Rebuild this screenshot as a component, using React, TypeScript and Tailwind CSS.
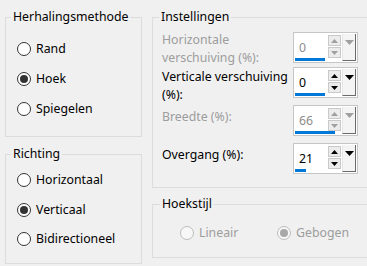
import type { ReactNode } from "react";

function Radio({
  label,
  checked = false,
  disabled = false,
  className = "",
}: {
  label: string;
  checked?: boolean;
  disabled?: boolean;
  className?: string;
}) {
  return (
    <div className={`flex h-[20px] items-center ${className}`}>
      <span
        className={`flex h-[14px] w-[14px] shrink-0 items-center justify-center rounded-full border ${
          disabled ? "border-[#bcbcbc] bg-[#f7f7f7]" : "border-[#333333] bg-white"
        }`}
      >
        {checked && (
          <span
            className={`h-[8px] w-[8px] rounded-full ${
              disabled ? "bg-[#a8a8a8]" : "bg-[#333333]"
            }`}
          />
        )}
      </span>
      <span
        className={`ml-[5px] leading-[20px] ${
          disabled ? "text-[#9d9d9d]" : "text-black"
        }`}
      >
        {label}
      </span>
    </div>
  );
}

function Group({
  title,
  className = "",
  legendClass = "ml-[5px]",
  children,
}: {
  title: string;
  className?: string;
  legendClass?: string;
  children: ReactNode;
}) {
  return (
    <fieldset className={`border border-[#dcdcdc] ${className}`}>
      <legend className={`px-[2px] leading-[16px] text-black ${legendClass}`}>
        {title}
      </legend>
      {children}
    </fieldset>
  );
}

function Arrow({ up, disabled }: { up?: boolean; disabled?: boolean }) {
  return (
    <svg width="7" height="4" viewBox="0 0 7 4">
      <polygon
        points={up ? "0,4 7,4 3.5,0" : "0,0 7,0 3.5,4"}
        fill={disabled ? "#a0a0a0" : "#000000"}
      />
    </svg>
  );
}

function Spinner({
  value,
  bar,
  disabled = false,
}: {
  value: string;
  bar: number;
  disabled?: boolean;
}) {
  return (
    <div className="flex h-[31px] w-[65px] shrink-0 border border-[#c6c6c6] bg-white p-[1px]">
      <div className="flex w-[46px] flex-col">
        <div className="flex flex-1">
          <div
            className={`flex-1 pl-[4px] pt-[5px] leading-[17px] ${
              disabled ? "text-[#8c8c8c]" : "text-black"
            }`}
          >
            {value}
          </div>
          <div className="flex w-[13px] flex-col gap-[1px] pt-[1px]">
            <div className="flex h-[11px] items-center justify-center border border-[#c9c9c9] bg-[#ececec]">
              <Arrow up disabled={disabled} />
            </div>
            <div className="flex h-[11px] items-center justify-center border border-[#c9c9c9] bg-[#ececec]">
              <Arrow disabled={disabled} />
            </div>
          </div>
        </div>
        <div className="h-[3px] bg-[#0078d7]" style={{ width: bar }} />
      </div>
      <div className="ml-[1px] flex h-[27px] w-[14px] justify-center border-r border-b border-l border-r-[#6a6a6a] border-b-[#6a6a6a] border-l-[#e6e6e6] bg-[#f4f4f4] pt-[6px]">
        <svg width="9" height="5" viewBox="0 0 9 5">
          <polygon
            points="0,0 9,0 4.5,5"
            fill={disabled ? "#a0a0a0" : "#000000"}
          />
        </svg>
      </div>
    </div>
  );
}

export default function App() {
  return (
    <div className="flex h-[266px] w-[367px] gap-[10px] overflow-hidden bg-[#f0f0f0] pl-[5px] pt-[9px] font-['Noto_Sans',sans-serif] text-[12.3px]">
      <div className="flex w-[137px] shrink-0 flex-col gap-[9px]">
        <Group title="Herhalingsmethode" className="h-[128px]">
          <div className="flex flex-col gap-[10px] pl-[11px] pt-[14px]">
            <Radio label="Rand" />
            <Radio label="Hoek" checked />
            <Radio label="Spiegelen" />
          </div>
        </Group>
        <Group title="Richting" className="h-[118px]">
          <div className="flex flex-col gap-[9.5px] pl-[11px] pt-[8px]">
            <Radio label="Horizontaal" />
            <Radio label="Verticaal" checked />
            <Radio label="Bidirectioneel" />
          </div>
        </Group>
      </div>

      <div className="flex w-[225px] shrink-0 flex-col gap-[8px]">
        <Group
          title="Instellingen"
          className="h-[179px]"
          legendClass="ml-[6px]"
        >
          <div className="flex flex-col pl-[9px] pt-[6px]">
            <div className="flex items-start">
              <div className="w-[131px] leading-[18px] text-[#9d9d9d]">
                Horizontale
                <br />
                verschuiving (%):
              </div>
              <div className="mt-[1px]">
                <Spinner value="0" bar={30} disabled />
              </div>
            </div>
            <div className="flex items-start">
              <div className="mt-[1px] w-[131px] leading-[18px] text-black">
                Verticale verschuiving
                <br />
                (%):
              </div>
              <Spinner value="0" bar={30} />
            </div>
            <div className="flex items-start">
              <div className="mt-[4px] w-[131px] leading-[18px] text-[#9d9d9d]">
                Breedte (%):
              </div>
              <div className="mt-[1px]">
                <Spinner value="66" bar={40} disabled />
              </div>
            </div>
            <div className="flex items-start">
              <div className="mt-[10px] w-[131px] leading-[18px] text-black">
                Overgang (%):
              </div>
              <div className="mt-[7px]">
                <Spinner value="21" bar={11} />
              </div>
            </div>
          </div>
        </Group>
        <Group title="Hoekstijl" className="h-[62px]" legendClass="ml-[7px]">
          <div className="flex pl-[27px] pt-[11px]">
            <Radio label="Lineair" disabled className="w-[97px]" />
            <Radio label="Gebogen" checked disabled />
          </div>
        </Group>
      </div>
    </div>
  );
}
